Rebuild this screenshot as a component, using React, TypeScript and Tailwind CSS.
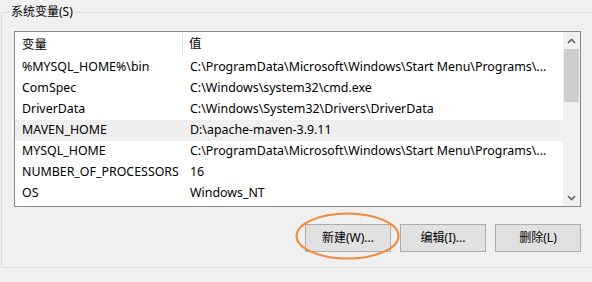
const rows = [
  { name: "%MYSQL_HOME%\\bin", value: "C:\\ProgramData\\Microsoft\\Windows\\Start Menu\\Programs\\..." },
  { name: "ComSpec", value: "C:\\Windows\\system32\\cmd.exe" },
  { name: "DriverData", value: "C:\\Windows\\System32\\Drivers\\DriverData" },
  { name: "MAVEN_HOME", value: "D:\\apache-maven-3.9.11", hover: true },
  { name: "MYSQL_HOME", value: "C:\\ProgramData\\Microsoft\\Windows\\Start Menu\\Programs\\..." },
  { name: "NUMBER_OF_PROCESSORS", value: "16" },
  { name: "OS", value: "Windows_NT" },
];

function Chevron({ up }: { up?: boolean }) {
  return (
    <svg width="9" height="6" viewBox="0 0 9 6" aria-hidden="true">
      <path
        d={up ? "M1 5 L4.5 1.5 L8 5" : "M1 1 L4.5 4.5 L8 1"}
        fill="none"
        stroke="#606060"
        strokeWidth="1.6"
      />
    </svg>
  );
}

export default function App() {
  return (
    <div
      className="relative h-[282px] w-[592px] overflow-hidden bg-[#f0f0f0] text-[12px] text-black"
      style={{ fontFamily: '"Noto Sans", "Noto Sans CJK SC", sans-serif' }}
    >
      <div className="relative ml-[1px] mt-[12px] h-[256px] w-[620px] border-y border-l border-[#dcdcdc] pl-[12px] pt-[18px]">
        <span className="absolute left-[7px] top-[-9px] bg-[#f0f0f0] px-[2px] leading-[16px]">
          系统变量(S)
        </span>

        <div className="flex h-[176px] w-[567px] border border-[#828790] bg-white text-[12.4px]">
          <div className="flex min-w-0 flex-1 flex-col">
            <div className="flex h-[25px] shrink-0 items-center">
              <div className="w-[168px] border-r border-[#e5e5e5] pl-[7px] leading-[25px]">变量</div>
              <div className="pl-[6px]">值</div>
            </div>
            {rows.map((row) => (
              <div
                key={row.name}
                className={`flex h-[21px] shrink-0 items-center ${row.hover ? "bg-[#efefef]" : ""}`}
              >
                <div className="w-[168px] truncate pl-[7px]">{row.name}</div>
                <div className="min-w-0 flex-1 truncate pl-[7px]">{row.value}</div>
              </div>
            ))}
          </div>

          <div className="flex w-[17px] shrink-0 flex-col bg-[#f0f0f0]">
            <div className="flex h-[17px] items-center justify-center">
              <Chevron up />
            </div>
            <div className="mx-[1px] h-[53px] bg-[#cdcdcd]" />
            <div className="flex-1" />
            <div className="flex h-[17px] items-center justify-center">
              <Chevron />
            </div>
          </div>
        </div>

        <div className="mt-[17px] flex w-[567px] justify-end gap-[9px]">
          <button type="button" className="h-[28px] w-[86px] border border-[#adadad] bg-[#e1e1e1]">
            新建(W)...
          </button>
          <button type="button" className="h-[28px] w-[86px] border border-[#adadad] bg-[#e1e1e1]">
            编辑(I)...
          </button>
          <button type="button" className="h-[28px] w-[86px] border border-[#adadad] bg-[#e1e1e1]">
            删除(L)
          </button>
        </div>
      </div>

      <svg
        className="pointer-events-none absolute left-[295px] top-[212px]"
        width="105"
        height="48"
        viewBox="0 0 105 48"
        aria-hidden="true"
      >
        <ellipse cx="52.5" cy="24" rx="51" ry="22.5" fill="none" stroke="#f08a3c" strokeWidth="2" />
      </svg>
    </div>
  );
}
